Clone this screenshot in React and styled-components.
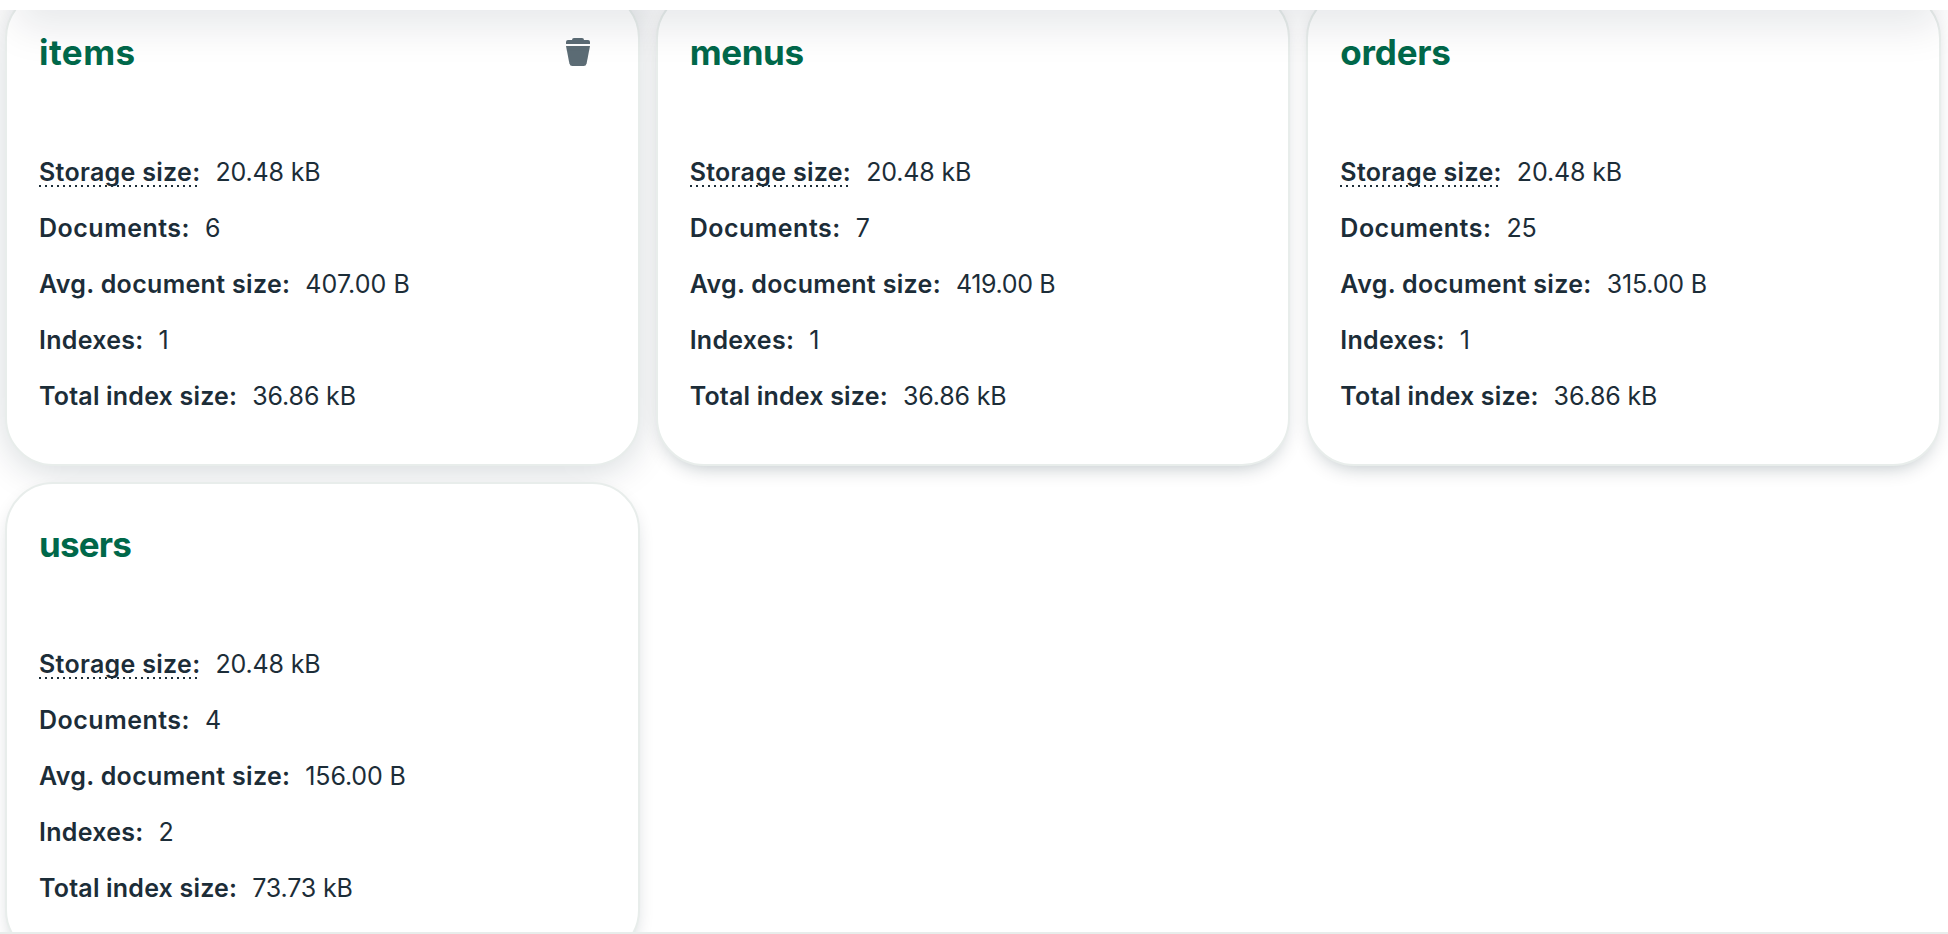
import React from 'react';
import styled, { createGlobalStyle, css } from 'styled-components';

const Global = createGlobalStyle`
  * { box-sizing: border-box; }
  html, body { margin: 0; background: #fff; overflow: hidden; }
`;

const Page = styled.div`
  width: 1948px;
  height: 934px;
  padding-top: 10px;
  background: #fff;
  font-family: Inter, 'Liberation Sans', sans-serif;
  color: #1c2d38;
`;

const Viewport = styled.div`
  position: relative;
  height: 924px;
  overflow: hidden;
  border-bottom: 2px solid #e8edeb;
`;

const ScrollShade = styled.div`
  position: absolute;
  inset: -60px 8px auto 16px;
  height: 60px;
  box-shadow: 0 18px 40px rgba(0, 20, 43, 0.095);
  pointer-events: none;
`;

const Grid = styled.div`
  display: grid;
  grid-template-columns: repeat(3, 1fr);
  grid-auto-rows: 476px;
  gap: 16px;
  margin-top: -20px;
  padding: 0 7px 0 5px;
`;

const Card = styled.article`
  padding: 36px 32px;
  border: 2px solid #e8edeb;
  border-radius: 48px;
  background: #fff;
  box-shadow: 0 8px 20px -8px rgba(0, 30, 43, 0.3);
  ${({ $hovered }) => $hovered && css`
    box-shadow: 0 6px 40px -4px rgba(0, 30, 43, 0.2);
  `}
`;

const Header = styled.header`
  display: flex;
  justify-content: space-between;
  height: 116px;
  padding-right: 14px;
`;

const Title = styled.h2`
  margin: 0;
  font-size: 35px;
  line-height: 48px;
  font-weight: 700;
  color: #00684a;
  letter-spacing: ${({ $tracking }) => $tracking || 0}px;
`;

const IconButton = styled.button`
  width: 28px;
  height: 32px;
  margin: 8px 0 0;
  padding: 0;
  border: 0;
  background: none;
  color: #5c6c75;
`;

const Stats = styled.dl`
  display: flex;
  flex-direction: column;
  margin: 0;
`;

const Row = styled.div`
  display: flex;
  align-items: baseline;
  height: 56px;
  font-size: 25px;
  line-height: 56px;
  white-space: nowrap;
`;

const Label = styled.dt`
  margin-right: 15px;
  font-weight: 600;
  letter-spacing: ${({ $tracking }) => $tracking || 0}px;
`;

const Hint = styled.span`
  background: repeating-linear-gradient(90deg, #1c2d38 0 2px, transparent 2px 6px) 0 100% / 100% 2px no-repeat;
`;

const Value = styled.dd`
  margin: 0;
  font-weight: 400;
  letter-spacing: ${({ $tracking }) => $tracking || 0}px;
`;

const collections = [
  { name: 'items', tracking: 0.45, hovered: true, values: ['20.48 kB', '6', '407.00 B', '1', '36.86 kB'] },
  { name: 'menus', tracking: -0.4, values: ['20.48 kB', '7', '419.00 B', '1', '36.86 kB'] },
  { name: 'orders', tracking: -0.2, values: ['20.48 kB', '25', '315.00 B', '1', '36.86 kB'] },
  { name: 'users', tracking: -0.8, values: ['20.48 kB', '4', '156.00 B', '2', '73.73 kB'] },
];

const valueTracking = { '407.00 B': 0.1, '419.00 B': -0.35 };

const labels = [
  { text: 'Storage size:', tracking: 0.3, hint: true },
  { text: 'Documents:', tracking: 0.5 },
  { text: 'Avg. document size:', tracking: 0.32 },
  { text: 'Indexes:', tracking: 0.28 },
  { text: 'Total index size:', tracking: 0.2 },
];

const TrashIcon = () => (
  <svg width="28" height="32" viewBox="0 0 28 32" fill="currentColor" aria-hidden="true">
    <path d="M2 8V6Q2 4 4 4H8Q8 2 10 2H18Q20 2 20 4H24Q26 4 26 6V8Z" />
    <path d="M2 10H26L22.6 27.4Q22 30 19.6 30H8.4Q6 30 5.4 27.4Z" />
  </svg>
);

const CollectionCard = ({ name, tracking, hovered, values }) => (
  <Card $hovered={hovered}>
    <Header>
      <Title $tracking={tracking}>{name}</Title>
      {hovered && <IconButton aria-label="Delete collection"><TrashIcon /></IconButton>}
    </Header>
    <Stats>
      {labels.map(({ text, tracking: labelTracking, hint }, i) => (
        <Row key={text}>
          <Label $tracking={labelTracking}>{hint ? <Hint>{text}</Hint> : text}</Label>
          <Value $tracking={valueTracking[values[i]] ?? -0.15}>{values[i]}</Value>
        </Row>
      ))}
    </Stats>
  </Card>
);

export default function App() {
  return (
    <Page>
      <Global />
      <Viewport>
        <Grid>
          {collections.map((c) => <CollectionCard key={c.name} {...c} />)}
        </Grid>
        <ScrollShade />
      </Viewport>
    </Page>
  );
}
